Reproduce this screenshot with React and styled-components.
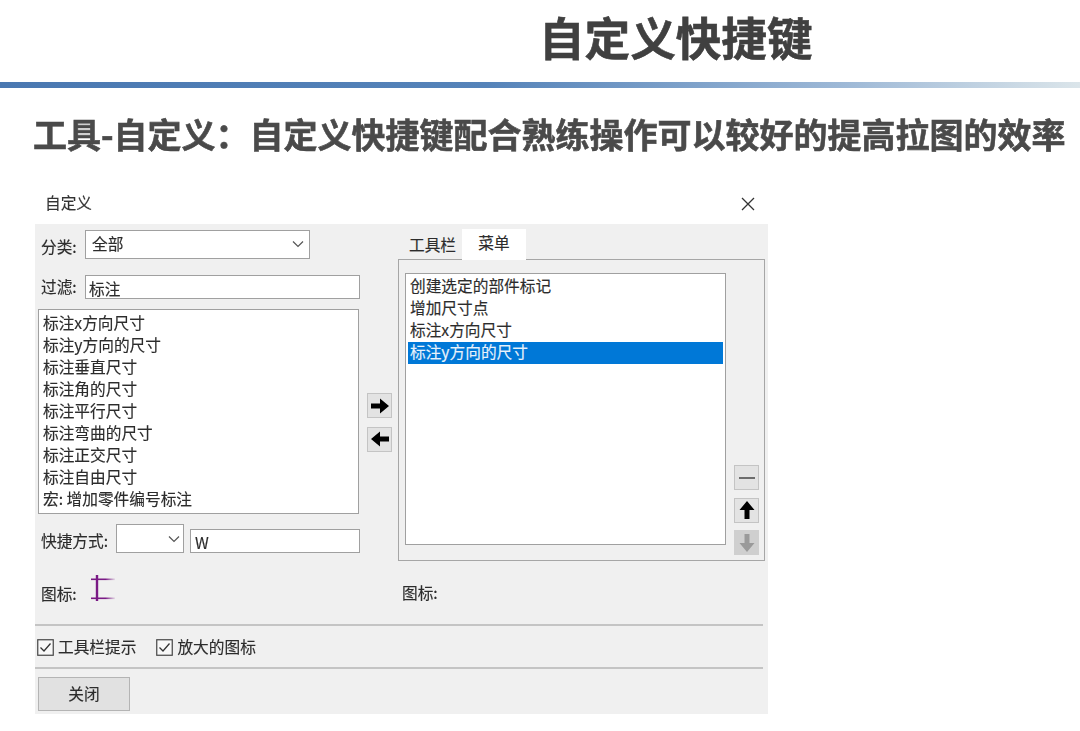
import React from "react";
import styled, { createGlobalStyle } from "styled-components";

const Global = createGlobalStyle`
  html, body { margin: 0; padding: 0; background: #fff; }
  body { font-family: "Noto Sans CJK SC", "Liberation Sans", sans-serif; color: #333; }
`;
const Page = styled.div`width: 1080px; height: 731px; overflow: hidden; background: #fff; display: flex; flex-direction: column;`;
const Title = styled.h1`
  margin: 0; height: 82px; box-sizing: border-box; padding: 7px 0 0 539px;
  font-size: 45.6px; line-height: 58px; font-weight: 700; color: #404040; -webkit-text-stroke: .6px #404040; filter: blur(.5px);
`;
const Bar = styled.div`height: 6px; background: linear-gradient(90deg, #4a78b1 0%, #5583b9 45%, #9db8d6 78%, #dbe5ea 100%);`;
const Subtitle = styled.h2`
  margin: 0; height: 102px; box-sizing: border-box; padding: 20px 0 0 33px; white-space: nowrap;
  font-size: 34px; line-height: 52px; font-weight: 700; color: #4a4a4a; -webkit-text-stroke: .6px #4a4a4a; filter: blur(.5px);
`;
const Dialog = styled.div`width: 733px; margin-left: 35px; filter: blur(.35px);`;
const TitleBar = styled.div`height: 34px; display: flex; align-items: center; justify-content: space-between; padding: 0 13px 6px 10px; box-sizing: border-box; font-size: 15.7px; color: #333; -webkit-text-stroke: .15px #333;`;
const DialogName = styled.span`padding-bottom: 4px;`;
const Panel = styled.div`height: 490px; box-sizing: border-box; background: #f0f0f0; display: flex; flex-direction: column; font-size: 15.7px; line-height: 22px; color: #2c2c2c; -webkit-text-stroke: .15px #2c2c2c;`;
const Columns = styled.div`display: grid; grid-template-columns: 325px 38px 367px; height: 397px; padding-top: 4px; box-sizing: border-box;`;
const Left = styled.div`display: flex; flex-direction: column;`;
const Row = styled.div`display: flex; align-items: ${p => p.$align || "center"}; margin-top: ${p => p.$mt}px; padding-left: 6px;`;
const Label = styled.span`width: ${p => p.$w}px; flex: none; white-space: nowrap; padding-top: ${p => p.$pt || 0}px; padding-bottom: ${p => p.$pb || 0}px; box-sizing: border-box;`;
const Field = styled.div`
  box-sizing: border-box; width: ${p => p.$w}px; height: ${p => p.$h}px; margin-left: ${p => p.$ml || 0}px;
  background: #fff; border: 1.5px solid #a0a0a0; display: flex; align-items: center; justify-content: space-between;
  padding: ${p => p.$pt || 0}px ${p => p.$pr || 3}px ${p => p.$pb || 0}px ${p => p.$pl || 3}px;
`;
const Chevron = () => (
  <svg width="12" height="8" viewBox="0 0 12 8"><path d="M1 1.5 6 6.5 11 1.5" fill="none" stroke="#555" strokeWidth="1.2" /></svg>
);
const ListBox = styled.div`
  box-sizing: border-box; background: #fff; border: 1.5px solid #a0a0a0;
  width: ${p => p.$w}px; height: ${p => p.$h}px; margin: ${p => p.$m};
  padding: ${p => p.$pad}; display: flex; flex-direction: column; flex: none;
`;
const Item = styled.div`
  height: 22px; line-height: 20px; padding-left: 2px; white-space: nowrap; flex: none;
  background: ${p => p.$sel ? "#0078d7" : "transparent"}; color: ${p => p.$sel ? "#e8f2fb" : "#2c2c2c"};
  -webkit-text-stroke-color: ${p => p.$sel ? "#e8f2fb" : "#2c2c2c"};
`;
const Mid = styled.div`display: flex; flex-direction: column; gap: 8.5px; padding: 165px 0 0 7px;`;
const ToolBtn = styled.div`
  box-sizing: border-box; width: 25px; height: 25px; flex: none; display: flex; align-items: center; justify-content: center;
  background: ${p => p.$off ? "#cfcfcf" : "#e3e3e3"}; border: 1.5px solid ${p => p.$off ? "#cfcfcf" : "#c4c4c4"};
`;
const Right = styled.div`display: flex; flex-direction: column;`;
const Tabs = styled.div`display: flex; align-items: flex-end; height: 31px; padding-left: 5px;`;
const Tab = styled.div`
  box-sizing: border-box; display: flex; justify-content: center; height: ${p => p.$active ? 31 : 27}px; width: ${p => p.$active ? 64 : 59}px;
  background: ${p => p.$active ? "#fff" : "#f0f0f0"}; padding-top: ${p => p.$active ? 3 : 2}px; margin-bottom: ${p => p.$active ? -1 : 0}px; position: relative; z-index: 1;
`;
const TabPanel = styled.div`
  box-sizing: border-box; height: 302px; width: 367px; border: 1.5px solid #a6a6a6; display: flex; padding-top: 13px; padding-left: 6px;
`;
const Side = styled.div`display: flex; flex-direction: column; gap: 7.5px; margin-left: 8px; padding-top: 192px;`;
const RightIcon = styled.div`padding: 21px 0 0 4px;`;
const Purple = styled.svg`margin-left: 13px; margin-top: -5px; flex: none;`;
const Divider = styled.div`height: 2px; width: 728px; background: #c4c4c4; flex: none; margin-top: ${p => p.$mt}px;`;
const Checks = styled.div`display: flex; align-items: center; height: 41px; padding: 1px 0 0 2px; box-sizing: border-box; gap: 20px;`;
const Check = styled.label`display: flex; align-items: center; gap: 4px;`;
const Box = styled.svg`flex: none;`;
const CloseBtn = styled.div`
  box-sizing: border-box; width: 92px; height: 34px; margin: 8px 0 0 3px; background: #e1e1e1; border: 1.5px solid #b4b4b4;
  display: flex; align-items: center; justify-content: center; padding-bottom: 1px;
`;

const left = ["标注x方向尺寸","标注y方向的尺寸","标注垂直尺寸","标注角的尺寸","标注平行尺寸","标注弯曲的尺寸","标注正交尺寸","标注自由尺寸","宏: 增加零件编号标注"];
const right = ["创建选定的部件标记","增加尺寸点","标注x方向尺寸","标注y方向的尺寸"];

const Arrow = ({ rot = 0, color = "#000" }) => (
  <svg width="20" height="18" viewBox="0 0 20 18" style={{ transform: `rotate(${rot}deg)` }}>
    <path d="M1 6.5H10V1.5L19 9 10 16.5V11.5H1Z" fill={color} />
  </svg>
);
const CheckBox = () => (
  <Box width="17" height="17" viewBox="0 0 17 17">
    <rect x=".75" y=".75" width="15.5" height="15.5" fill="#f8f8f8" stroke="#444" strokeWidth="1.2" />
    <path d="M3.5 8.5 7 12 13.5 4.5" fill="none" stroke="#333" strokeWidth="1.3" />
  </Box>
);

export default function App() {
  return (
    <Page>
      <Global />
      <Title>自定义快捷键</Title>
      <Bar />
      <Subtitle>工具-自定义：自定义快捷键配合熟练操作可以较好的提高拉图的效率</Subtitle>
      <Dialog>
        <TitleBar>
          <DialogName>自定义</DialogName>
          <svg width="14" height="14" viewBox="0 0 14 14"><path d="M1 1 13 13M13 1 1 13" stroke="#333" strokeWidth="1.3" /></svg>
        </TitleBar>
        <Panel>
          <Columns>
            <Left>
              <Row $mt={2}><Label $w={44} $pt={4}>分类:</Label><Field $w={225} $h={29} $pl={6} $pr={5} $pb={1}>全部<Chevron /></Field></Row>
              <Row $mt={16}><Label $w={44}>过滤:</Label><Field $w={275} $h={24} $pt={3}>标注</Field></Row>
              <ListBox $w={321} $h={205} $m="10px 0 0 3px" $pad="3px 2px">
                {left.map(t => <Item key={t}>{t}</Item>)}
              </ListBox>
              <Row $mt={10} $align="flex-end">
                <Label $w={75} $pb={1}>快捷方式:</Label>
                <Field $w={68} $h={29} $pr={3}><span /><Chevron /></Field>
                <Field $w={170} $h={24} $ml={6} $pl={4} $pt={3}>W</Field>
              </Row>
              <Row $mt={22}>
                <Label $w={36} $pt={8}>图标:</Label>
                <Purple width="26" height="28" viewBox="0 0 26 28">
                  <defs>
                    <linearGradient id="fade" x1="0" x2="1" y1="0" y2="0">
                      <stop offset="0" stopColor="#7a1a85" />
                      <stop offset=".6" stopColor="#7a1a85" />
                      <stop offset="1" stopColor="#7a1a85" stopOpacity=".1" />
                    </linearGradient>
                  </defs>
                  <path d="M7 1V27" stroke="#7a1a85" strokeWidth="2.4" fill="none" />
                  <rect x="1" y="4.5" width="24" height="1.6" fill="url(#fade)" />
                  <rect x="1" y="23.5" width="24" height="1.6" fill="url(#fade)" />
                </Purple>
              </Row>
            </Left>
            <Mid>
              <ToolBtn><Arrow /></ToolBtn>
              <ToolBtn><Arrow rot={180} /></ToolBtn>
            </Mid>
            <Right>
              <Tabs><Tab>工具栏</Tab><Tab $active>菜单</Tab></Tabs>
              <TabPanel>
                <ListBox $w={321} $h={272} $m="0" $pad="2px 2px">
                  {right.map((t, i) => <Item key={t} $sel={i === 3}>{t}</Item>)}
                </ListBox>
                <Side>
                  <ToolBtn><svg width="16" height="4" viewBox="0 0 16 4"><path d="M0 2H16" stroke="#444" strokeWidth="1.5" /></svg></ToolBtn>
                  <ToolBtn><Arrow rot={-90} /></ToolBtn>
                  <ToolBtn $off><Arrow rot={90} color="#9a9a9a" /></ToolBtn>
                </Side>
              </TabPanel>
              <RightIcon>图标:</RightIcon>
            </Right>
          </Columns>
          <Divider $mt={3} />
          <Checks>
            <Check><CheckBox />工具栏提示</Check>
            <Check><CheckBox />放大的图标</Check>
          </Checks>
          <Divider $mt={0} />
          <CloseBtn>关闭</CloseBtn>
        </Panel>
      </Dialog>
    </Page>
  );
}
